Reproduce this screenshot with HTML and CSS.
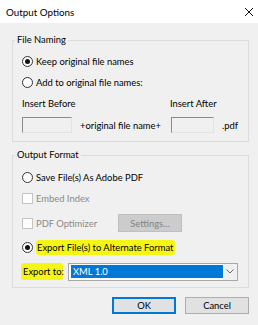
FILE: index.html
```html
<!DOCTYPE html>
<html lang="en">
<head>
    <meta charset="UTF-8">
    <title>Output Options</title>
    <link rel="stylesheet" href="styles.css">
</head>
<body>
    <div class="titlebar">
        <span class="title">Output Options</span>
        <svg class="close" width="10" height="10" viewBox="0 0 10 10">
            <path d="M1 1 L9 9 M9 1 L1 9" stroke="#111" stroke-width="1" fill="none"/>
        </svg>
    </div>

    <div class="content">
        <div class="group naming">
            <div class="group-title">File Naming</div>
            <div class="rows">
                <label class="row"><span class="radio checked"></span>Keep original file names</label>
                <label class="row"><span class="radio"></span>Add to original file names:</label>
                <div class="insert-grid labels">
                    <span class="span2">Insert Before</span>
                    <span class="span2">Insert After</span>
                </div>
                <div class="insert-grid fields">
                    <span class="field"></span>
                    <span class="mid">+original file name+</span>
                    <span class="field"></span>
                    <span class="ext">.pdf</span>
                </div>
            </div>
        </div>

        <div class="group format">
            <div class="group-title">Output Format</div>
            <div class="rows">
                <label class="row"><span class="radio"></span>Save File(s) As Adobe PDF</label>
                <label class="row disabled"><span class="check"></span>Embed Index</label>
                <div class="row optimizer">
                    <label class="opt-label disabled"><span class="check"></span>PDF Optimizer</label>
                    <span class="btn settings">Settings...</span>
                </div>
                <label class="row"><span class="radio checked"></span><span class="mark">Export File(s) to Alternate Format</span></label>
                <div class="row export">
                    <span class="mark export-label">Export to:</span>
                    <div class="select">
                        <span class="select-value">XML 1.0</span>
                        <span class="select-arrow">
                            <svg width="8" height="5" viewBox="0 0 8 5"><path d="M0.5 0.5 L4 4 L7.5 0.5" stroke="#666" fill="none"/></svg>
                        </span>
                    </div>
                </div>
            </div>
        </div>
    </div>

    <div class="buttons">
        <span class="btn default">OK</span>
        <span class="btn">Cancel</span>
    </div>
</body>
</html>
```

FILE: styles.css
```css
body {
    margin: 0;
    background: #f0f0f0;
    font-family: Lato, "Liberation Sans", sans-serif;
    font-size: 9.4px;
    color: #000;
    width: 258px;
    height: 325px;
    overflow: hidden;
}
.titlebar {
    height: 23px;
    background: #fff;
    display: flex;
    align-items: center;
    justify-content: space-between;
    padding: 0 4px 0 6px;
}
.title {
    font-size: 9.8px;
}
.close {
    display: block;
    margin-top: 1px;
}
.content {
    padding: 0 9px 0 12px;
}
.group {
    border: 1px solid #dcdcdc;
    padding: 0 10px 8px 9px;
}
.naming {
    margin-top: 17px;
}
.format {
    margin-top: 13px;
    padding-bottom: 5px;
}
.group-title {
    width: fit-content;
    line-height: 16px;
    margin: -9px 0 0 -7px;
    padding: 0 2px;
    background: #f0f0f0;
}
.naming .rows {
    padding-top: 3px;
}
.format .rows {
    padding-top: 4px;
}
.row {
    display: flex;
    align-items: center;
    height: 21px;
    white-space: nowrap;
}
.radio {
    width: 9px;
    height: 9px;
    border: 1px solid #333;
    border-radius: 50%;
    margin-right: 3px;
    background: #fff;
    display: flex;
    align-items: center;
    justify-content: center;
}
.radio.checked::after {
    content: "";
    width: 5px;
    height: 5px;
    border-radius: 50%;
    background: #111;
}
.check {
    width: 9px;
    height: 9px;
    border: 1px solid #c4c4c4;
    background: #fcfcfc;
    margin-right: 3px;
}
.disabled {
    color: #8a8a8a;
}
.insert-grid {
    display: grid;
    grid-template-columns: 50px 99px 43px auto;
    align-items: center;
    white-space: nowrap;
}
.labels {
    height: 21px;
}
.labels .span2:first-child {
    grid-column: 1 / 3;
}
.labels .span2:last-child {
    grid-column: 3 / 5;
    margin-left: -1px;
}
.fields {
    margin-top: 3px;
    height: 16px;
}
.field {
    height: 14px;
    background: #f0f0f0;
    border: 1px solid #e3e3e3;
    border-top-color: #8c8c8c;
    border-left-color: #8c8c8c;
}
.mid {
    padding-left: 8px;
}
.ext {
    padding-left: 8px;
}
.optimizer {
    height: 28px;
}
.opt-label {
    display: flex;
    align-items: center;
    width: 96px;
}
.btn {
    display: flex;
    align-items: center;
    justify-content: center;
    width: 62px;
    height: 15px;
    background: #e1e1e1;
    border: 1px solid #adadad;
}
.settings {
    height: 16px;
    background: #cccccc;
    border-color: #bfbfbf;
    color: #838383;
}
.mark {
    background: #f6f614;
    border-radius: 3px;
    padding: 2px 2px 2px 1px;
}
.export {
    margin-top: 3px;
}
.export-label {
    box-sizing: border-box;
    width: 42px;
    margin-left: -1px;
    padding: 3px 1px 3px 2px;
}
.select {
    display: flex;
    margin-left: 5px;
    width: 166px;
    height: 15px;
    border: 1px solid #a8a8a8;
    background: #fff;
    padding: 1px 0 0 2px;
}
.select-value {
    flex: 1;
    height: 13px;
    background: #0078d7;
    color: #fff;
    padding-left: 2px;
    line-height: 13px;
}
.select-arrow {
    width: 14px;
    display: flex;
    align-items: center;
    justify-content: center;
    background: #f0f0f0;
    margin-top: -1px;
}
.buttons {
    display: flex;
    justify-content: flex-end;
    gap: 9px;
    margin-top: 9px;
    padding-right: 9px;
}
.buttons .btn {
    height: 15px;
}
.default {
    border-color: #0078d7;
    box-shadow: inset 0 0 0 1px #0078d7;
}
```
